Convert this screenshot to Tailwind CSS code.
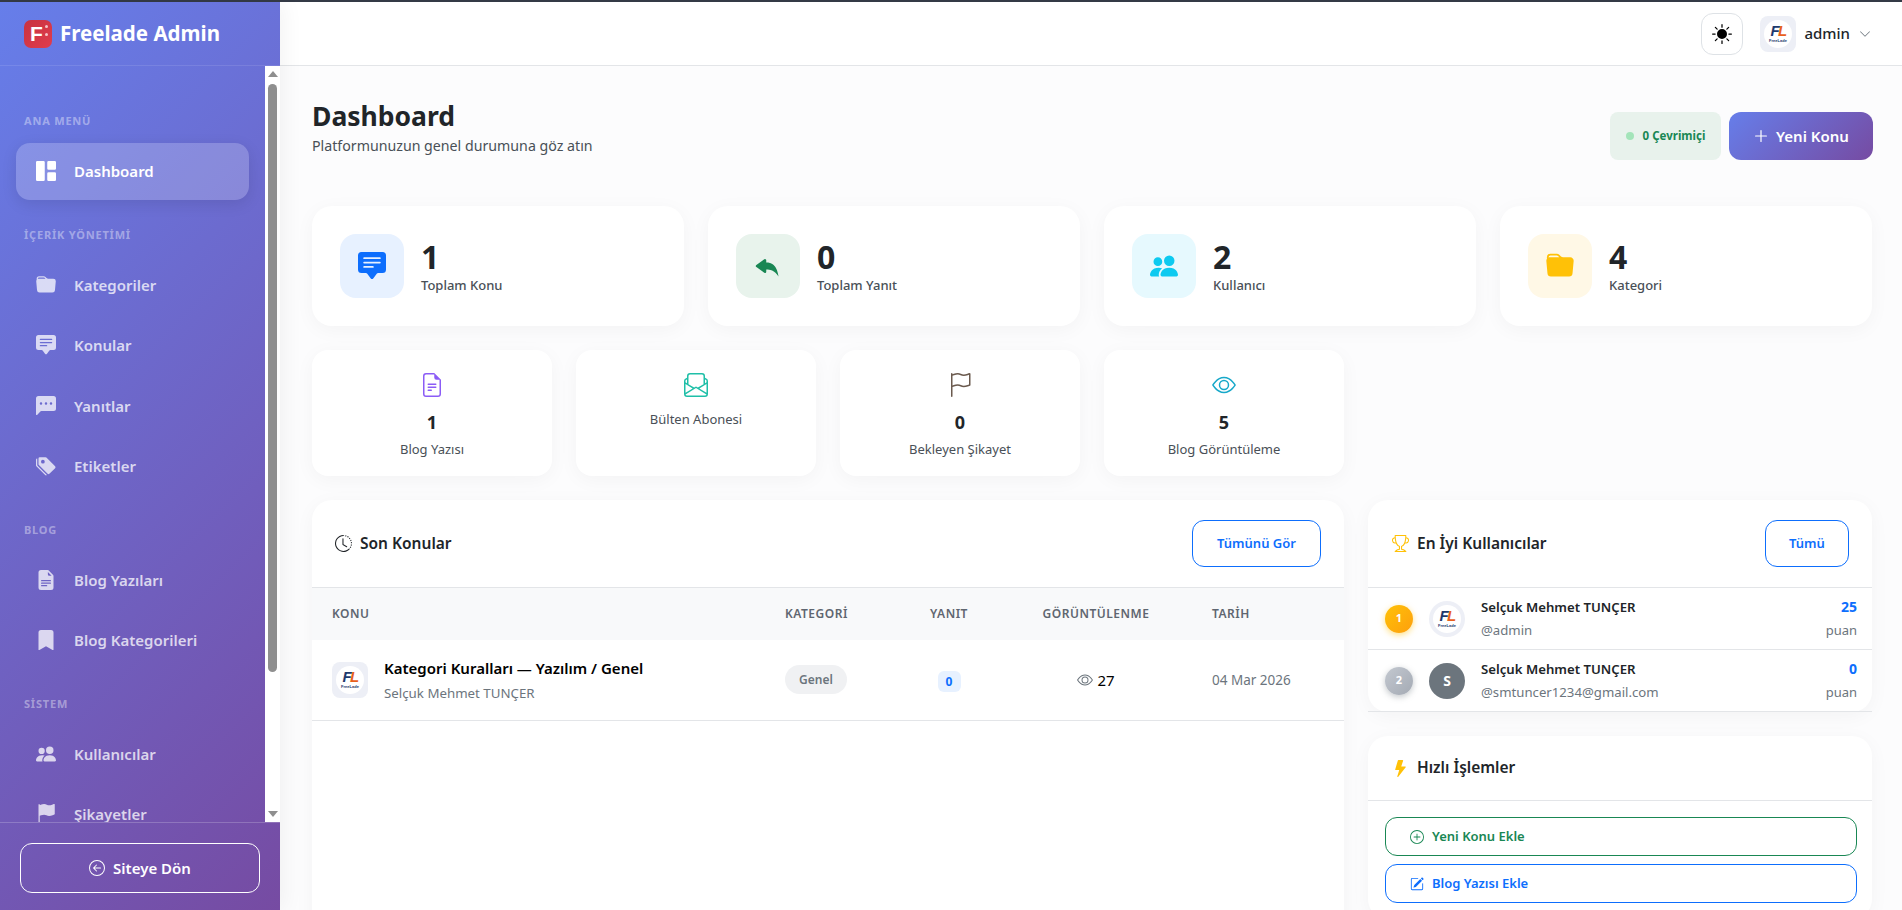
<!DOCTYPE html>
<html lang="tr" class="h-[910px] overflow-hidden">
<head>
  <meta charset="UTF-8" />
  <meta name="viewport" content="width=device-width, initial-scale=1.0" />
  <title>Freelade Admin</title>
  <script src="https://cdn.jsdelivr.net/npm/@tailwindcss/browser@4"></script>
</head>
<body class="h-[910px] overflow-hidden flex flex-col bg-[#fcfcfd] text-[#212529] font-['Noto_Sans',sans-serif]">

  <!-- icon sprite -->
  <svg class="hidden">
    <symbol id="i-grid" viewBox="0 0 16 16"><path d="M0 1a1 1 0 0 1 1-1h5a1 1 0 0 1 1 1v14a1 1 0 0 1-1 1H1a1 1 0 0 1-1-1V1zm9 0a1 1 0 0 1 1-1h5a1 1 0 0 1 1 1v5a1 1 0 0 1-1 1h-5a1 1 0 0 1-1-1V1zm0 9a1 1 0 0 1 1-1h5a1 1 0 0 1 1 1v5a1 1 0 0 1-1 1h-5a1 1 0 0 1-1-1v-5z"/></symbol>
    <symbol id="i-folder" viewBox="0 0 16 16"><path d="M9.828 3h3.982a2 2 0 0 1 1.992 2.181l-.637 7A2 2 0 0 1 13.174 14H2.825a2 2 0 0 1-1.991-1.819l-.637-7a1.99 1.99 0 0 1 .342-1.31L.5 3a2 2 0 0 1 2-2h3.672a2 2 0 0 1 1.414.586l.828.828A2 2 0 0 0 9.828 3zm-8.322.12C1.72 3.042 1.95 3 2.19 3h5.396l-.707-.707A1 1 0 0 0 6.172 2H2.5a1 1 0 0 0-1 .981l.006.139z"/></symbol>
    <symbol id="i-chat" viewBox="0 0 16 16"><path d="M0 2a2 2 0 0 1 2-2h12a2 2 0 0 1 2 2v8a2 2 0 0 1-2 2h-2.5a1 1 0 0 0-.8.4l-1.9 2.533a1 1 0 0 1-1.6 0L5.3 12.4a1 1 0 0 0-.8-.4H2a2 2 0 0 1-2-2V2zm3.5 1a.5.5 0 0 0 0 1h9a.5.5 0 0 0 0-1h-9zm0 2.5a.5.5 0 0 0 0 1h9a.5.5 0 0 0 0-1h-9zm0 2.5a.5.5 0 0 0 0 1h5a.5.5 0 0 0 0-1h-5z"/></symbol>
    <symbol id="i-dots" viewBox="0 0 16 16"><path d="M0 2a2 2 0 0 1 2-2h12a2 2 0 0 1 2 2v8a2 2 0 0 1-2 2H4.414a1 1 0 0 0-.707.293L.854 15.146A.5.5 0 0 1 0 14.793V2zm5 4a1 1 0 1 0-2 0 1 1 0 0 0 2 0zm4 0a1 1 0 1 0-2 0 1 1 0 0 0 2 0zm3 1a1 1 0 1 0 0-2 1 1 0 0 0 0 2z"/></symbol>
    <symbol id="i-tags" viewBox="0 0 16 16"><path d="M2 2a1 1 0 0 1 1-1h4.586a1 1 0 0 1 .707.293l7 7a1 1 0 0 1 0 1.414l-4.586 4.586a1 1 0 0 1-1.414 0l-7-7A1 1 0 0 1 2 6.586V2zm3.5 4a1.5 1.5 0 1 0 0-3 1.5 1.5 0 0 0 0 3z"/><path d="M1.293 7.793A1 1 0 0 1 1 7.086V2a1 1 0 0 0-1 1v4.586a1 1 0 0 0 .293.707l7 7a1 1 0 0 0 1.414 0l.043-.043-7.457-7.457z"/></symbol>
    <symbol id="i-file" viewBox="0 0 16 16"><path d="M9.293 0H4a2 2 0 0 0-2 2v12a2 2 0 0 0 2 2h8a2 2 0 0 0 2-2V4.707A1 1 0 0 0 13.707 4L10 .293A1 1 0 0 0 9.293 0zM9.5 3.5v-2l3 3h-2a1 1 0 0 1-1-1zM4.5 9a.5.5 0 0 1 0-1h7a.5.5 0 0 1 0 1h-7zM4 10.5a.5.5 0 0 1 .5-.5h7a.5.5 0 0 1 0 1h-7a.5.5 0 0 1-.5-.5zm.5 2.5a.5.5 0 0 1 0-1h4a.5.5 0 0 1 0 1h-4z"/></symbol>
    <symbol id="i-bookmark" viewBox="0 0 16 16"><path d="M2 2v13.5a.5.5 0 0 0 .74.439L8 13.069l5.26 2.87A.5.5 0 0 0 14 15.5V2a2 2 0 0 0-2-2H4a2 2 0 0 0-2 2z"/></symbol>
    <symbol id="i-people" viewBox="0 0 16 16"><path d="M7 14s-1 0-1-1 1-4 5-4 5 3 5 4-1 1-1 1H7Zm4-6a3 3 0 1 0 0-6 3 3 0 0 0 0 6Zm-5.784 6A2.238 2.238 0 0 1 5 13c0-1.355.68-2.75 1.936-3.72A6.325 6.325 0 0 0 5 9c-4 0-5 3-5 4s1 1 1 1h4.216ZM4.5 8a2.5 2.5 0 1 0 0-5 2.5 2.5 0 0 0 0 5Z"/></symbol>
    <symbol id="i-flag-fill" viewBox="0 0 16 16"><path d="M14.778.085A.5.5 0 0 1 15 .5V8a.5.5 0 0 1-.314.464L14.5 8l.186.464-.003.001-.006.003-.023.009a12.435 12.435 0 0 1-.397.15c-.264.095-.631.223-1.047.35-.816.252-1.879.523-2.71.523-.847 0-1.548-.28-2.158-.525l-.028-.01C7.68 8.71 7.14 8.5 6.5 8.5c-.7 0-1.638.23-2.437.477A19.626 19.626 0 0 0 3 9.342V15.5a.5.5 0 0 1-1 0V.5a.5.5 0 0 1 1 0v.282c.226-.079.496-.17.79-.26C4.606.272 5.67 0 6.5 0c.84 0 1.524.277 2.121.519l.043.018C9.286.788 9.828 1 10.5 1c.7 0 1.638-.23 2.437-.477a19.587 19.587 0 0 0 1.349-.476l.019-.007.004-.002h.001"/></symbol>
    <symbol id="i-back" viewBox="0 0 16 16"><path fill-rule="evenodd" d="M1 8a7 7 0 1 0 14 0A7 7 0 0 0 1 8zm15 0A8 8 0 1 1 0 8a8 8 0 0 1 16 0zm-4.5-.5a.5.5 0 0 1 0 1H5.707l2.147 2.146a.5.5 0 0 1-.708.708l-3-3a.5.5 0 0 1 0-.708l3-3a.5.5 0 1 1 .708.708L5.707 7.5H11.5z"/></symbol>
    <symbol id="i-reply" viewBox="0 0 16 16"><path d="M5.921 11.9 1.353 8.62a.719.719 0 0 1 0-1.238L5.921 4.1A.716.716 0 0 1 7 4.719V6c1.5 0 6 0 7 8-2.5-4.5-7-4-7-4v1.281c0 .56-.606.898-1.079.62z"/></symbol>
    <symbol id="i-file-line" viewBox="0 0 16 16"><path d="M5.5 7a.5.5 0 0 0 0 1h5a.5.5 0 0 0 0-1h-5zM5 9.5a.5.5 0 0 1 .5-.5h5a.5.5 0 0 1 0 1h-5a.5.5 0 0 1-.5-.5zm0 2a.5.5 0 0 1 .5-.5h2a.5.5 0 0 1 0 1h-2a.5.5 0 0 1-.5-.5z"/><path d="M9.5 0H4a2 2 0 0 0-2 2v12a2 2 0 0 0 2 2h8a2 2 0 0 0 2-2V4.5L9.5 0zm0 1v2A1.5 1.5 0 0 0 11 4.5h2V14a1 1 0 0 1-1 1H4a1 1 0 0 1-1-1V2a1 1 0 0 1 1-1h5.5z"/></symbol>
    <symbol id="i-envelope" viewBox="0 0 16 16"><path d="M4 0a2 2 0 0 0-2 2v1.133l-.941.502A2 2 0 0 0 0 5.4V14a2 2 0 0 0 2 2h12a2 2 0 0 0 2-2V5.4a2 2 0 0 0-1.059-1.765L14 3.133V2a2 2 0 0 0-2-2H4Zm10 4.267.47.25A1 1 0 0 1 15 5.4v.817l-1 .6v-2.55Zm-1 3.15-3.75 2.25L8 8.917l-1.25.75L3 7.417V2a1 1 0 0 1 1-1h8a1 1 0 0 1 1 1v5.417Zm-11-.6-1-.6V5.4a1 1 0 0 1 .53-.882L2 4.267v2.55Zm13 .566v5.734l-4.778-2.867L15 7.383Zm-.035 6.88A1 1 0 0 1 14 15H2a1 1 0 0 1-.965-.738L8 10.083l6.965 4.18ZM1 13.116V7.383l4.778 2.867L1 13.117Z"/></symbol>
    <symbol id="i-flag" viewBox="0 0 16 16"><path d="M14.778.085A.5.5 0 0 1 15 .5V8a.5.5 0 0 1-.314.464L14.5 8l.186.464-.003.001-.006.003-.023.009a12.435 12.435 0 0 1-.397.15c-.264.095-.631.223-1.047.35-.816.252-1.879.523-2.71.523-.847 0-1.548-.28-2.158-.525l-.028-.01C7.68 8.71 7.14 8.5 6.5 8.5c-.7 0-1.638.23-2.437.477A19.626 19.626 0 0 0 3 9.342V15.5a.5.5 0 0 1-1 0V.5a.5.5 0 0 1 1 0v.282c.226-.079.496-.17.79-.26C4.606.272 5.67 0 6.5 0c.84 0 1.524.277 2.121.519l.043.018C9.286.788 9.828 1 10.5 1c.7 0 1.638-.23 2.437-.477a19.587 19.587 0 0 0 1.349-.476l.019-.007.004-.002h.001M14 1.221c-.22.078-.48.167-.766.255-.81.252-1.872.523-2.734.523-.886 0-1.592-.286-2.203-.534l-.008-.003C7.662 1.21 7.139 1 6.5 1c-.669 0-1.606.229-2.415.478A21.294 21.294 0 0 0 3 1.845v6.433c.22-.078.48-.167.766-.255C4.576 7.77 5.638 7.5 6.5 7.5c.847 0 1.548.28 2.158.525l.028.01C9.32 8.29 9.86 8.5 10.5 8.5c.668 0 1.606-.229 2.415-.478A21.317 21.317 0 0 0 14 7.655V1.222z"/></symbol>
    <symbol id="i-eye" viewBox="0 0 16 16"><path d="M16 8s-3-5.5-8-5.5S0 8 0 8s3 5.5 8 5.5S16 8 16 8zM1.173 8a13.133 13.133 0 0 1 1.66-2.043C4.12 4.668 5.88 3.5 8 3.5c2.12 0 3.879 1.168 5.168 2.457A13.133 13.133 0 0 1 14.828 8c-.058.087-.122.183-.195.288-.335.48-.83 1.12-1.465 1.755C11.879 11.332 10.119 12.5 8 12.5c-2.12 0-3.879-1.168-5.168-2.457A13.134 13.134 0 0 1 1.172 8z"/><path d="M8 5.5a2.5 2.5 0 1 0 0 5 2.5 2.5 0 0 0 0-5zM4.5 8a3.5 3.5 0 1 1 7 0 3.5 3.5 0 0 1-7 0z"/></symbol>
    <symbol id="i-clock" viewBox="0 0 16 16"><path d="M8.515 1.019A7 7 0 0 0 8 1V0a8 8 0 0 1 .589.022l-.074.997zm2.004.45a7.003 7.003 0 0 0-.985-.299l.219-.976c.383.086.76.2 1.126.342l-.36.933zm1.37.71a7.01 7.01 0 0 0-.439-.27l.493-.87a8.025 8.025 0 0 1 .979.654l-.615.789a6.996 6.996 0 0 0-.418-.302zm1.834 1.79a6.99 6.99 0 0 0-.653-.796l.724-.69c.27.285.52.59.747.91l-.818.576zm.744 1.352a7.08 7.08 0 0 0-.214-.468l.893-.45a7.976 7.976 0 0 1 .45 1.088l-.95.313a7.023 7.023 0 0 0-.179-.483zm.53 2.507a6.991 6.991 0 0 0-.1-1.025l.985-.17c.067.386.106.778.116 1.17l-1 .025zm-.131 1.538c.033-.17.06-.339.081-.51l.993.123a7.957 7.957 0 0 1-.23 1.155l-.964-.267c.046-.165.086-.332.12-.501zm-.952 2.379c.184-.29.346-.594.486-.908l.914.405c-.16.36-.345.706-.555 1.038l-.845-.535zm-.964 1.205c.122-.122.239-.248.35-.378l.758.653a8.073 8.073 0 0 1-.401.432l-.707-.707z"/><path d="M8 1a7 7 0 1 0 4.95 11.95l.707.707A8.001 8.001 0 1 1 8 0v1z"/><path d="M7.5 3a.5.5 0 0 1 .5.5v5.21l3.248 1.856a.5.5 0 0 1-.496.868l-3.5-2A.5.5 0 0 1 7 9V3.5a.5.5 0 0 1 .5-.5z"/></symbol>
    <symbol id="i-trophy" viewBox="0 0 16 16"><path d="M2.5.5A.5.5 0 0 1 3 0h10a.5.5 0 0 1 .5.5c0 .538-.012 1.05-.034 1.536a3 3 0 1 1-1.133 5.89c-.79 1.865-1.878 2.777-2.833 3.011v2.173l1.425.356c.194.048.377.135.537.255L13.3 15.1a.5.5 0 0 1-.3.9H3a.5.5 0 0 1-.3-.9l1.838-1.379c.16-.12.343-.207.537-.255L6.5 13.11v-2.173c-.955-.234-2.043-1.146-2.833-3.012a3 3 0 1 1-1.132-5.89A33.076 33.076 0 0 1 2.5.5zm.099 2.54a2 2 0 0 0 .72 3.935c-.333-1.05-.588-2.346-.72-3.935zm10.083 3.935a2 2 0 0 0 .72-3.935c-.133 1.59-.388 2.885-.72 3.935zM3.504 1c.007.517.026 1.006.056 1.469.13 2.028.457 3.546.87 4.667C5.294 9.48 6.484 10 7 10a.5.5 0 0 1 .5.5v2.61a1 1 0 0 1-.757.97l-1.426.356a.5.5 0 0 0-.179.085L4.5 15h7l-.638-.479a.501.501 0 0 0-.18-.085l-1.425-.356a1 1 0 0 1-.757-.97V10.5A.5.5 0 0 1 9 10c.516 0 1.706-.52 2.57-2.864.413-1.12.74-2.64.87-4.667.03-.463.049-.952.056-1.469H3.504z"/></symbol>
    <symbol id="i-bolt" viewBox="0 0 16 16"><path d="M5.52.359A.5.5 0 0 1 6 0h4a.5.5 0 0 1 .474.658L8.694 6H12.5a.5.5 0 0 1 .395.807l-7 9a.5.5 0 0 1-.873-.454L6.823 9.5H3.5a.5.5 0 0 1-.48-.641l2.5-8.5z"/></symbol>
    <symbol id="i-plus-circle" viewBox="0 0 16 16"><path d="M8 15A7 7 0 1 1 8 1a7 7 0 0 1 0 14zm0 1A8 8 0 1 0 8 0a8 8 0 0 0 0 16z"/><path d="M8 4a.5.5 0 0 1 .5.5v3h3a.5.5 0 0 1 0 1h-3v3a.5.5 0 0 1-1 0v-3h-3a.5.5 0 0 1 0-1h3v-3A.5.5 0 0 1 8 4z"/></symbol>
    <symbol id="i-plus" viewBox="0 0 16 16"><path d="M8 2a.6.6 0 0 1 .6.6v4.8h4.8a.6.6 0 0 1 0 1.2H8.6v4.8a.6.6 0 0 1-1.2 0V8.6H2.6a.6.6 0 0 1 0-1.2h4.8V2.6A.6.6 0 0 1 8 2z"/></symbol>
    <symbol id="i-pencil" viewBox="0 0 16 16"><path d="M15.502 1.94a.5.5 0 0 1 0 .706L14.459 3.69l-2-2L13.502.646a.5.5 0 0 1 .707 0l1.293 1.293zm-1.75 2.456-2-2L4.939 9.21a.5.5 0 0 0-.121.196l-.805 2.414a.25.25 0 0 0 .316.316l2.414-.805a.5.5 0 0 0 .196-.12l6.813-6.814z"/><path d="M1 13.5A1.5 1.5 0 0 0 2.5 15h11a1.5 1.5 0 0 0 1.5-1.5v-6a.5.5 0 0 0-1 0v6a.5.5 0 0 1-.5.5h-11a.5.5 0 0 1-.5-.5v-11a.5.5 0 0 1 .5-.5H9a.5.5 0 0 0 0-1H2.5A1.5 1.5 0 0 0 1 2.5v11z"/></symbol>
    <symbol id="i-sun" viewBox="0 0 16 16"><path d="M8 12a4 4 0 1 0 0-8 4 4 0 0 0 0 8zM8 0a.5.5 0 0 1 .5.5v2a.5.5 0 0 1-1 0v-2A.5.5 0 0 1 8 0zm0 13a.5.5 0 0 1 .5.5v2a.5.5 0 0 1-1 0v-2A.5.5 0 0 1 8 13zm8-5a.5.5 0 0 1-.5.5h-2a.5.5 0 0 1 0-1h2a.5.5 0 0 1 .5.5zM3 8a.5.5 0 0 1-.5.5h-2a.5.5 0 0 1 0-1h2A.5.5 0 0 1 3 8zm10.657-5.657a.5.5 0 0 1 0 .707l-1.414 1.415a.5.5 0 1 1-.707-.708l1.414-1.414a.5.5 0 0 1 .707 0zm-9.193 9.193a.5.5 0 0 1 0 .707L3.05 13.657a.5.5 0 0 1-.707-.707l1.414-1.414a.5.5 0 0 1 .707 0zm9.193 2.121a.5.5 0 0 1-.707 0l-1.414-1.414a.5.5 0 0 1 .707-.707l1.414 1.414a.5.5 0 0 1 0 .707zM4.464 4.465a.5.5 0 0 1-.707 0L2.343 3.05a.5.5 0 1 1 .707-.707l1.414 1.414a.5.5 0 0 1 0 .708z"/></symbol>
    <symbol id="i-chevron" viewBox="0 0 16 16"><path d="M1.646 4.646a.5.5 0 0 1 .708 0L8 10.293l5.646-5.647a.5.5 0 0 1 .708.708l-6 6a.5.5 0 0 1-.708 0l-6-6a.5.5 0 0 1 0-.708z"/></symbol>
    <symbol id="i-fl" viewBox="0 0 36 36">
      <circle cx="18" cy="18" r="14" fill="#fff"/>
      <text x="10.5" y="20" font-family="Liberation Sans" font-size="15" font-weight="700" font-style="italic" fill="#1e3a6e">F</text>
      <text x="18" y="20" font-family="Liberation Sans" font-size="15" font-weight="700" font-style="italic" fill="#e8601c">L</text>
      <text x="18" y="26" text-anchor="middle" font-family="Liberation Sans" font-size="4" font-weight="700" fill="#1e3a6e">FreeLade</text>
    </symbol>
  </svg>

  <div class="h-[2px] bg-[#343a46] shrink-0"></div>

  <div class="flex flex-1 min-h-0">

    <!-- Sidebar -->
    <aside class="w-[280px] shrink-0 flex flex-col bg-[linear-gradient(135deg,#667eea,#764ba2)] shadow-[4px_0_20px_rgba(0,0,0,0.05)] z-10">
      <div class="h-[64px] shrink-0 flex items-center gap-[8px] pl-[24px] border-b border-white/10">
        <div class="relative w-[28px] h-[28px] rounded-[7px] bg-gradient-to-br from-[#c8323f] to-[#e03c4e] flex items-center justify-center text-white font-extrabold text-[21px] leading-none font-['Liberation_Sans',sans-serif] pr-[3px]">
          F
          <span class="absolute right-[4px] top-[5px] w-[3px] h-[3px] rounded-full bg-white/70"></span>
          <span class="absolute right-[4px] top-[13px] w-[3px] h-[3px] rounded-full bg-white/70"></span>
        </div>
        <span class="text-white font-bold text-[20.5px] leading-none">Freelade Admin</span>
      </div>

      <div class="flex-1 min-h-0 flex">
        <nav class="flex-1 min-w-0 overflow-hidden pt-[47px] pl-[16px] pr-[16px] text-[15px] font-semibold text-white/75">
          <div class="h-4 mb-[14px] pl-[8px] text-[11px] leading-4 font-bold tracking-[0.8px] text-white/40">ANA MENÜ</div>
          <a class="h-[56.5px] mb-[4px] flex items-center gap-[18px] pl-[20px] rounded-[14px] bg-white/20 text-white shadow-[0_4px_15px_rgba(0,0,0,0.1)]"><svg class="w-5 h-5 fill-current shrink-0"><use href="#i-grid"/></svg>Dashboard</a>

          <div class="h-4 mt-[27px] mb-[14px] pl-[8px] text-[11px] leading-4 font-bold tracking-[0.8px] text-white/40">İÇERİK YÖNETİMİ</div>
          <a class="h-[56.5px] mb-[4px] flex items-center gap-[18px] pl-[20px]"><svg class="w-5 h-5 fill-current shrink-0"><use href="#i-folder"/></svg>Kategoriler</a>
          <a class="h-[56.5px] mb-[4px] flex items-center gap-[18px] pl-[20px]"><svg class="w-5 h-5 fill-current shrink-0"><use href="#i-chat"/></svg>Konular</a>
          <a class="h-[56.5px] mb-[4px] flex items-center gap-[18px] pl-[20px]"><svg class="w-5 h-5 fill-current shrink-0"><use href="#i-dots"/></svg>Yanıtlar</a>
          <a class="h-[56.5px] mb-[4px] flex items-center gap-[18px] pl-[20px]"><svg class="w-5 h-5 fill-current shrink-0"><use href="#i-tags"/></svg>Etiketler</a>

          <div class="h-4 mt-[27px] mb-[14px] pl-[8px] text-[11px] leading-4 font-bold tracking-[0.8px] text-white/40">BLOG</div>
          <a class="h-[56.5px] mb-[4px] flex items-center gap-[18px] pl-[20px]"><svg class="w-5 h-5 fill-current shrink-0"><use href="#i-file"/></svg>Blog Yazıları</a>
          <a class="h-[56.5px] mb-[4px] flex items-center gap-[18px] pl-[20px]"><svg class="w-5 h-5 fill-current shrink-0"><use href="#i-bookmark"/></svg>Blog Kategorileri</a>

          <div class="h-4 mt-[27px] mb-[14px] pl-[8px] text-[11px] leading-4 font-bold tracking-[0.8px] text-white/40">SİSTEM</div>
          <a class="h-[56.5px] mb-[4px] flex items-center gap-[18px] pl-[20px]"><svg class="w-5 h-5 fill-current shrink-0"><use href="#i-people"/></svg>Kullanıcılar</a>
          <a class="h-[56.5px] mb-[4px] flex items-center gap-[18px] pl-[20px]"><svg class="w-5 h-5 fill-current shrink-0"><use href="#i-flag-fill"/></svg>Şikayetler</a>
        </nav>

        <!-- scrollbar -->
        <div class="w-[15px] shrink-0 bg-white flex flex-col items-center pt-[5px] pb-[5px]">
          <div class="w-0 h-0 border-l-[5px] border-r-[5px] border-b-[6px] border-l-transparent border-r-transparent border-b-[#8f8f8f]"></div>
          <div class="w-[9px] h-[588px] mt-[7px] rounded-full bg-[#8f8f8f]"></div>
          <div class="flex-1"></div>
          <div class="w-0 h-0 border-l-[5px] border-r-[5px] border-t-[6px] border-l-transparent border-r-transparent border-t-[#8f8f8f]"></div>
        </div>
      </div>

      <div class="h-[88px] shrink-0 px-[20px] pt-[20px] border-t border-white/20">
        <a class="h-[50px] flex items-center justify-center gap-[8px] rounded-[12px] border border-white text-white font-semibold text-[15px]"><svg class="w-4 h-4 fill-current"><use href="#i-back"/></svg>Siteye Dön</a>
      </div>
    </aside>

    <div class="flex-1 min-w-0 flex flex-col">
      <!-- Topbar -->
      <header class="h-[64px] shrink-0 bg-white border-b border-[#e3e5e8] flex items-center justify-end pr-[31px]">
        <button class="w-[42px] h-[42px] rounded-[12px] border border-[#dee2e6] flex items-center justify-center mr-[17px]"><svg class="w-5 h-5 fill-black"><use href="#i-sun"/></svg></button>
        <div class="w-[36px] h-[36px] rounded-[8px] bg-[#edeff6] mr-[8px]"><svg class="w-9 h-9"><use href="#i-fl"/></svg></div>
        <span class="text-[15px] font-medium mr-[9px]">admin</span>
        <svg class="w-3 h-3 fill-[#6c757d]"><use href="#i-chevron"/></svg>
      </header>

      <!-- Content -->
      <main class="flex-1 min-h-0 overflow-hidden pl-[32px] pr-[30px]">
        <div class="flex justify-between h-[140px] pt-[32px]">
          <div>
            <h1 class="text-[26.5px] leading-[36px] font-bold">Dashboard</h1>
            <p class="text-[14.2px] leading-[20px] mt-[2px] text-[#495057]">Platformunuzun genel durumuna göz atın</p>
          </div>
          <div class="flex gap-[8px] h-[48px] mt-[14px] -mr-[1px]">
            <div class="w-[111px] rounded-[8px] bg-[#e8f2ec] flex items-center justify-center gap-[9px] text-[11.5px] font-bold text-[#198754]"><span class="w-2 h-2 shrink-0 rounded-full bg-[#a3e4b9]"></span>0 Çevrimiçi</div>
            <button class="w-[144px] rounded-[12px] bg-[linear-gradient(135deg,#667eea,#764ba2)] flex items-center justify-center gap-[7px] text-white font-semibold text-[15px]"><svg class="w-4 h-4 fill-current"><use href="#i-plus"/></svg>Yeni Konu</button>
          </div>
        </div>

        <!-- main stats -->
        <div class="grid grid-cols-4 gap-[24px]">
          <div class="h-[120px] rounded-[20px] bg-white shadow-[0_4px_20px_rgba(0,0,0,0.04)] flex items-center pl-[28px] gap-[17px]">
            <div class="w-16 h-16 rounded-2xl bg-[#e7f1ff] flex items-center justify-center"><svg class="w-7 h-7 fill-[#0d6efd]"><use href="#i-chat"/></svg></div>
            <div><div class="text-[32px] leading-[40px] font-bold">1</div><div class="text-[13px] leading-[20px] font-medium -mt-[2px] text-[#495057]">Toplam Konu</div></div>
          </div>
          <div class="h-[120px] rounded-[20px] bg-white shadow-[0_4px_20px_rgba(0,0,0,0.04)] flex items-center pl-[28px] gap-[17px]">
            <div class="w-16 h-16 rounded-2xl bg-[#e8f3ec] flex items-center justify-center"><svg class="w-7 h-7 fill-[#198754]"><use href="#i-reply"/></svg></div>
            <div><div class="text-[32px] leading-[40px] font-bold">0</div><div class="text-[13px] leading-[20px] font-medium -mt-[2px] text-[#495057]">Toplam Yanıt</div></div>
          </div>
          <div class="h-[120px] rounded-[20px] bg-white shadow-[0_4px_20px_rgba(0,0,0,0.04)] flex items-center pl-[28px] gap-[17px]">
            <div class="w-16 h-16 rounded-2xl bg-[#e6f9fe] flex items-center justify-center"><svg class="w-7 h-7 fill-[#0dcaf0]"><use href="#i-people"/></svg></div>
            <div><div class="text-[32px] leading-[40px] font-bold">2</div><div class="text-[13px] leading-[20px] font-medium -mt-[2px] text-[#495057]">Kullanıcı</div></div>
          </div>
          <div class="h-[120px] rounded-[20px] bg-white shadow-[0_4px_20px_rgba(0,0,0,0.04)] flex items-center pl-[28px] gap-[17px]">
            <div class="w-16 h-16 rounded-2xl bg-[#fff8e6] flex items-center justify-center"><svg class="w-7 h-7 fill-[#ffc107]"><use href="#i-folder"/></svg></div>
            <div><div class="text-[32px] leading-[40px] font-bold">4</div><div class="text-[13px] leading-[20px] font-medium -mt-[2px] text-[#495057]">Kategori</div></div>
          </div>
        </div>

        <!-- small stats -->
        <div class="grid grid-cols-6 gap-[24px] mt-[24px]">
          <div class="h-[126px] rounded-2xl bg-white shadow-[0_4px_20px_rgba(0,0,0,0.04)] flex flex-col items-center pt-[23px]">
            <svg class="w-6 h-6 fill-[#8b5cf6]"><use href="#i-file-line"/></svg>
            <div class="text-[18px] leading-[26px] font-bold mt-[12px]">1</div>
            <div class="text-[13px] leading-[20px] mt-[4px] text-[#495057]">Blog Yazısı</div>
          </div>
          <div class="h-[126px] rounded-2xl bg-white shadow-[0_4px_20px_rgba(0,0,0,0.04)] flex flex-col items-center pt-[23px]">
            <svg class="w-6 h-6 fill-[#1fbfa8]"><use href="#i-envelope"/></svg>
            <div class="text-[13px] leading-[20px] mt-[12px] text-[#495057]">Bülten Abonesi</div>
          </div>
          <div class="h-[126px] rounded-2xl bg-white shadow-[0_4px_20px_rgba(0,0,0,0.04)] flex flex-col items-center pt-[23px]">
            <svg class="w-6 h-6 fill-[#6b5a4e]"><use href="#i-flag"/></svg>
            <div class="text-[18px] leading-[26px] font-bold mt-[12px]">0</div>
            <div class="text-[13px] leading-[20px] mt-[4px] text-[#495057]">Bekleyen Şikayet</div>
          </div>
          <div class="h-[126px] rounded-2xl bg-white shadow-[0_4px_20px_rgba(0,0,0,0.04)] flex flex-col items-center pt-[23px]">
            <svg class="w-6 h-6 fill-[#17a8c9]"><use href="#i-eye"/></svg>
            <div class="text-[18px] leading-[26px] font-bold mt-[12px]">5</div>
            <div class="text-[13px] leading-[20px] mt-[4px] text-[#495057]">Blog Görüntüleme</div>
          </div>
        </div>

        <!-- bottom -->
        <div class="grid grid-cols-[1032px_504px] gap-[24px] mt-[24px]">
          <section class="h-[500px] rounded-[20px] bg-white shadow-[0_4px_20px_rgba(0,0,0,0.04)]">
            <div class="h-[88px] flex items-center justify-between pl-[23px] pr-[23px] border-b border-[#e3e5e8]">
              <h2 class="flex items-center gap-[8px] text-[15.5px] font-semibold"><svg class="w-[17px] h-[17px] fill-current"><use href="#i-clock"/></svg>Son Konular</h2>
              <a class="w-[129px] h-[47px] rounded-[12px] border border-[#0d6efd] text-[#0d6efd] flex items-center justify-center text-[13px] font-semibold">Tümünü Gör</a>
            </div>
            <table class="w-full table-fixed">
              <colgroup><col class="w-[461px]"><col class="w-[120px]"><col class="w-[112px]"><col class="w-[182px]"><col class="w-[157px]"></colgroup>
              <thead class="bg-[#f8f9fa] text-[12px] font-semibold text-[#5f6670] tracking-[0.5px]">
                <tr class="h-[52px]">
                  <th class="text-left pl-[20px] font-semibold">KONU</th>
                  <th class="text-left pl-[12px] font-semibold">KATEGORİ</th>
                  <th class="text-center font-semibold">YANIT</th>
                  <th class="text-center font-semibold">GÖRÜNTÜLENME</th>
                  <th class="text-left pl-[25px] font-semibold">TARİH</th>
                </tr>
              </thead>
              <tbody>
                <tr class="h-[80px] border-b border-[#e3e5e8]">
                  <td class="pl-[20px]">
                    <div class="flex items-center gap-[16px]">
                      <div class="w-9 h-9 rounded-[8px] bg-[#edeff6] shrink-0"><svg class="w-9 h-9"><use href="#i-fl"/></svg></div>
                      <div>
                        <div class="text-[15px] leading-[22px] font-semibold text-black">Kategori Kuralları — Yazılım / Genel</div>
                        <div class="text-[13.3px] leading-[18px] mt-[5px] text-[#6c757d]">Selçuk Mehmet TUNÇER</div>
                      </div>
                    </div>
                  </td>
                  <td class="pl-[12px]"><span class="inline-flex h-[29px] w-[62px] items-center justify-center rounded-full bg-[#f0f1f3] text-[12px] font-semibold text-[#6c757d]">Genel</span></td>
                  <td class="text-center"><span class="inline-flex w-[23px] h-[21px] items-center justify-center rounded-[6px] bg-[#e7f1ff] text-[12px] font-bold text-[#0d6efd]">0</span></td>
                  <td><div class="flex items-center justify-center gap-[4px] text-[15px] text-black"><svg class="w-4 h-4 fill-[#6c757d]"><use href="#i-eye"/></svg>27</div></td>
                  <td class="pl-[25px] text-[13.5px] text-[#6c757d]">04 Mar 2026</td>
                </tr>
              </tbody>
            </table>
          </section>

          <div class="flex flex-col gap-[24px]">
            <section class="rounded-[20px] bg-white shadow-[0_4px_20px_rgba(0,0,0,0.04)]">
              <div class="h-[88px] flex items-center justify-between pl-[24px] pr-[23px] border-b border-[#e3e5e8]">
                <h2 class="flex items-center gap-[8px] text-[15.5px] font-semibold"><svg class="w-[17px] h-[17px] fill-[#ffc107]"><use href="#i-trophy"/></svg>En İyi Kullanıcılar</h2>
                <a class="w-[84px] h-[47px] rounded-[12px] border border-[#0d6efd] text-[#0d6efd] flex items-center justify-center text-[13px] font-semibold">Tümü</a>
              </div>
              <div class="h-[62px] flex items-center pl-[17px] pr-[15px] border-b border-[#e3e5e8]">
                <div class="w-7 h-7 rounded-full bg-gradient-to-br from-[#ffc107] to-[#fd9f0d] text-white text-[11px] font-bold flex items-center justify-center shadow-[0_2px_6px_rgba(255,193,7,0.5)]">1</div>
                <div class="w-9 h-9 rounded-full bg-[#edeff6] ml-[16px]"><svg class="w-9 h-9"><use href="#i-fl"/></svg></div>
                <div class="ml-[16px] flex-1">
                  <div class="text-[13.2px] leading-[20px] font-semibold">Selçuk Mehmet TUNÇER</div>
                  <div class="text-[13.2px] leading-[20px] mt-[3px] text-[#6c757d]">@admin</div>
                </div>
                <div class="text-right">
                  <div class="text-[14px] leading-[20px] font-bold text-[#0d6efd]">25</div>
                  <div class="text-[13px] leading-[20px] mt-[3px] text-[#6c757d]">puan</div>
                </div>
              </div>
              <div class="h-[62px] flex items-center pl-[17px] pr-[15px] border-b border-[#e3e5e8]">
                <div class="w-7 h-7 rounded-full bg-gradient-to-br from-[#c3c8d0] to-[#a4aab4] text-white text-[11px] font-bold flex items-center justify-center shadow-[0_2px_6px_rgba(108,117,125,0.4)]">2</div>
                <div class="w-9 h-9 rounded-full bg-[#6c757d] ml-[16px] text-white font-bold text-[14px] flex items-center justify-center">S</div>
                <div class="ml-[16px] flex-1">
                  <div class="text-[13.2px] leading-[20px] font-semibold">Selçuk Mehmet TUNÇER</div>
                  <div class="text-[13.2px] leading-[20px] mt-[3px] text-[#6c757d]">@smtuncer1234@gmail.com</div>
                </div>
                <div class="text-right">
                  <div class="text-[14px] leading-[20px] font-bold text-[#0d6efd]">0</div>
                  <div class="text-[13px] leading-[20px] mt-[3px] text-[#6c757d]">puan</div>
                </div>
              </div>
            </section>

            <section class="rounded-[20px] bg-white shadow-[0_4px_20px_rgba(0,0,0,0.04)]">
              <div class="h-[65px] flex items-center pl-[24px] border-b border-[#e3e5e8]">
                <h2 class="flex items-center gap-[8px] text-[15.5px] font-semibold"><svg class="w-[17px] h-[17px] fill-[#ffc107]"><use href="#i-bolt"/></svg>Hızlı İşlemler</h2>
              </div>
              <div class="pt-[16px] pl-[17px] pr-[15px] pb-[16px] flex flex-col gap-[8px]">
                <a class="h-[39px] flex items-center gap-[8px] pl-[24px] rounded-[12px] border border-[#198754] text-[#198754] text-[13px] font-semibold"><svg class="w-[14px] h-[14px] fill-current"><use href="#i-plus-circle"/></svg>Yeni Konu Ekle</a>
                <a class="h-[39px] flex items-center gap-[8px] pl-[24px] rounded-[12px] border border-[#0d6efd] text-[#0d6efd] text-[13px] font-semibold"><svg class="w-[14px] h-[14px] fill-current"><use href="#i-pencil"/></svg>Blog Yazısı Ekle</a>
              </div>
            </section>
          </div>
        </div>
      </main>
    </div>
  </div>
</body>
</html>
